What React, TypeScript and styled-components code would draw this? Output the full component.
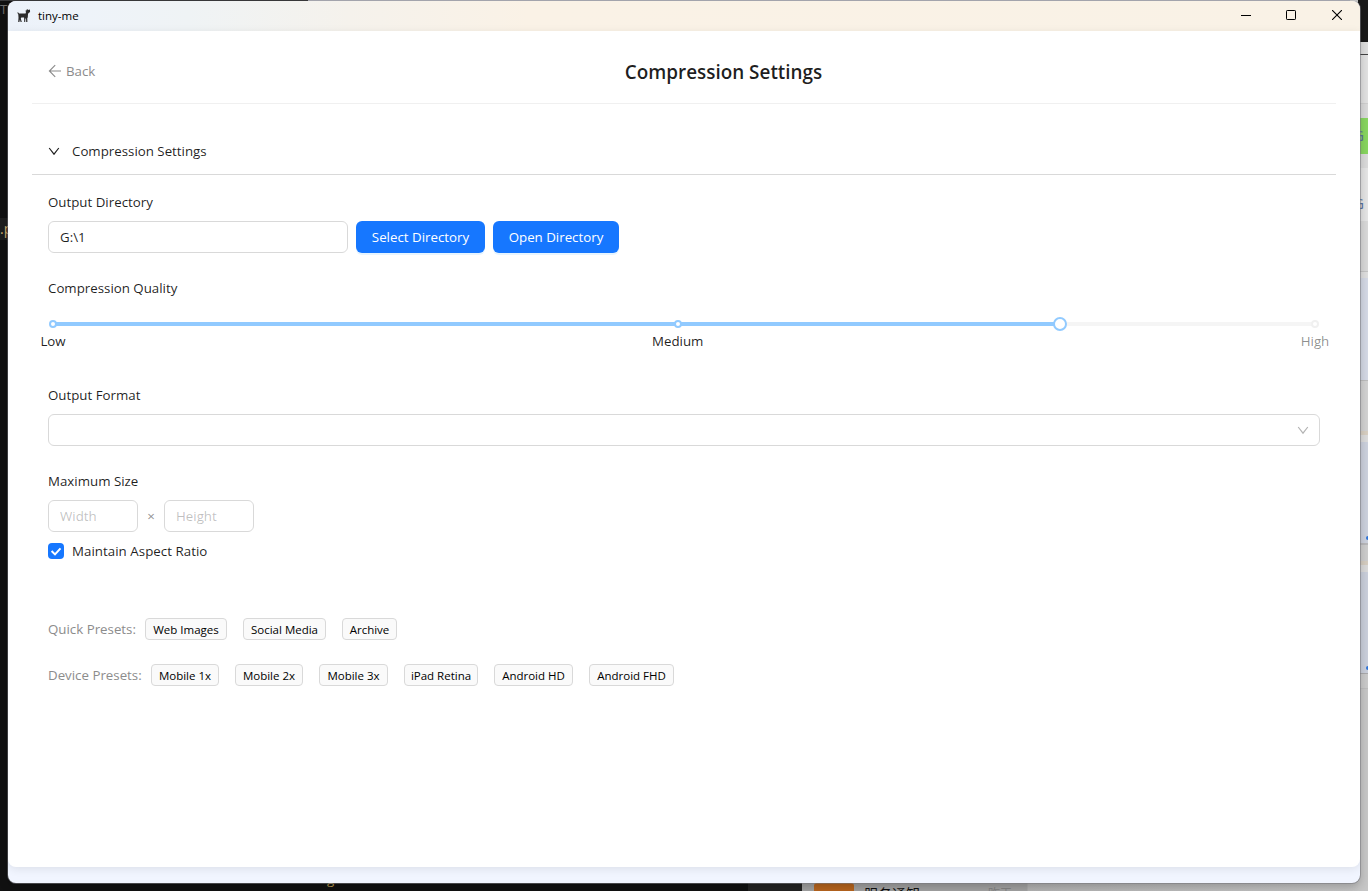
import React from "react";
import styled, { createGlobalStyle } from "styled-components";

const GlobalStyle = createGlobalStyle`
  * { box-sizing: border-box; }
  body {
    margin: 0;
    overflow: hidden;
    font-family: "Open Sans", "Noto Sans", sans-serif;
    font-size: 13.3px;
    line-height: 22px;
    color: rgba(0, 0, 0, 0.88);
  }
  button, input { font: inherit; color: inherit; letter-spacing: inherit; }
`;

const Desktop = styled.div`
  position: relative;
  width: 1368px;
  height: 891px;
  overflow: hidden;
  display: flex;
  background: #111;
`;

const EditorPane = styled.div`
  width: 802px;
  display: flex;
  flex-direction: column;
  justify-content: space-between;
  background:
    linear-gradient(90deg, #3a3a3c 0 308px, #a9abb3 308px) 0 0 / 100% 1px no-repeat,
    linear-gradient(90deg, #111 0 748px, #232323 748px);
`;

const EditorTop = styled.div`
  width: 308px;
  height: 270px;
  padding-top: 1px;
  color: #6d6d6d;
  font-size: 13px;
  line-height: 17px;
`;

const EditorFile = styled.div`
  width: 8px;
  height: 22px;
  margin-top: 200px;
  overflow: hidden;
  background: #1e1e1e;
  color: #d0b070;
  font-size: 14px;
  line-height: 22px;
`;

const EditorTail = styled.div`
  height: 12px;
  padding-left: 327px;
  overflow: hidden;
  color: #b79a52;
  line-height: 0;
`;

const ChatPane = styled.div`
  flex: 1;
  display: flex;
  justify-content: space-between;
  align-items: flex-end;
  background:
    linear-gradient(#a9abb3, #a9abb3) 0 0 / 548px 1px no-repeat,
    linear-gradient(90deg, #a3a3a3 0 225px, #b4b4b4 226px, #c6c6c6);
`;

const ChatRow = styled.div`
  display: flex;
  height: 8px;
  padding-left: 12px;
  overflow: hidden;
  font-family: "Noto Sans CJK SC", sans-serif;
  font-size: 14px;
  line-height: 20px;
  color: #111;
`;

const Avatar = styled.div`
  width: 40px;
  height: 40px;
  border-radius: 3px;
  margin-right: 10px;
  background: #b8651f;
`;

const ChatDate = styled.span`
  margin-left: 68px;
  font-size: 12px;
  color: #858585;
`;

const EdgeColumn = styled.div`
  width: 10px;
  height: 891px;
  display: flex;
  flex-direction: column;
`;

const EdgeBlock = styled.div<{ $h: number; $c: string; $shift: number }>`
  flex: none;
  height: ${(p) => p.$h}px;
  background: ${(p) => p.$c};
  display: flex;
  align-items: center;
  justify-content: flex-end;
  padding: ${(p) => p.$shift}px 4px 0 0;
  overflow: hidden;
  color: #5872a0;
  font-size: 14px;
`;

const EdgeDot = styled.span`
  width: 2px;
  height: 4px;
  margin: auto -4px 3px 0;
  border-radius: 2px 0 0 2px;
  background: #2f74d8;
`;

const Window = styled.main`
  position: absolute;
  left: 8px;
  top: 1px;
  width: 1352px;
  height: 882px;
  display: flex;
  flex-direction: column;
  overflow: hidden;
  border-radius: 8px;
  background: #f1f5ff;
  box-shadow: 0 1px 0 0 rgba(120, 120, 125, 0.55), 1px 0 0 0 rgba(120, 120, 125, 0.55),
    -1px 0 0 0 rgba(120, 120, 125, 0.45), 0 4px 10px rgba(0, 0, 0, 0.22);
`;

const TitleBar = styled.header`
  flex: none;
  height: 30px;
  display: flex;
  align-items: center;
  padding-left: 9px;
  font-size: 11.5px;
  color: #000;
  background: linear-gradient(90deg, #ecf2fa 0, #eef3f9 80px, #eff3f5 180px, #f5f2ec 340px, #faf2e6 520px, #f9f2e6 100%);
`;

const AppName = styled.span`
  flex: 1;
  margin-left: 6px;
`;

const WindowButton = styled.button`
  width: 46px;
  height: 30px;
  padding: 0 0 2px;
  border: 0;
  background: none;
  display: flex;
  align-items: center;
  justify-content: center;
`;

const Page = styled.section`
  flex: none;
  height: 836px;
  padding: 0 24px;
  background: #fff;
  border-radius: 0 0 8px 8px;
  box-shadow: 0 2px 10px rgba(0, 0, 0, 0.09);
`;

const PageHeader = styled.div`
  height: 73px;
  display: flex;
  align-items: center;
  padding: 9px 16px 0;
  border-bottom: 1px solid #f0f0f0;
`;

const BackButton = styled.button`
  width: 79px;
  padding: 0 0 2px;
  border: 0;
  background: none;
  display: flex;
  align-items: center;
  gap: 4px;
  color: #8c8c8c;
`;

const Title = styled.h1`
  flex: 1;
  margin: 0;
  text-align: center;
  font-size: 18.9px;
  font-weight: 600;
  line-height: 28px;
`;

const SectionHeader = styled.div`
  height: 71px;
  display: flex;
  align-items: center;
  gap: 12px;
  padding: 24px 16px 0;
  border-bottom: 1px solid #d9d9d9;
`;

const SectionBody = styled.div`
  padding: 16px;
`;

const Field = styled.div`
  margin-bottom: 24px;
`;

const Label = styled.div`
  height: 22px;
  margin-bottom: 8px;
`;

const ControlRow = styled.div`
  display: flex;
  align-items: center;
  gap: 8px;
`;

const TextInput = styled.input<{ $w: number }>`
  width: ${(p) => p.$w}px;
  height: 32px;
  padding: 4px 11px;
  border: 1px solid #d9d9d9;
  border-radius: 6px;
  background: #fff;
  outline: none;
  &::placeholder { color: rgba(0, 0, 0, 0.25); }
`;

const PrimaryButton = styled.button<{ $w: number }>`
  width: ${(p) => p.$w}px;
  height: 32px;
  padding: 0;
  border: 0;
  border-radius: 6px;
  background: #1677ff;
  color: #fff;
  white-space: nowrap;
  box-shadow: 0 2px 0 rgba(5, 145, 255, 0.1);
`;

const SliderField = styled.div`
  height: 107px;
`;

const Slider = styled.div`
  position: relative;
  height: 4px;
  margin: 23px 5px 0;
  border-radius: 2px;
  background: #f5f5f5;
`;

const SliderTrack = styled.div`
  width: 79.8%;
  height: 4px;
  border-radius: 2px;
  background: #91caff;
`;

const SliderDot = styled.span<{ $at: number; $on?: boolean }>`
  position: absolute;
  left: ${(p) => p.$at}%;
  top: -2px;
  width: 8px;
  height: 8px;
  margin-left: -4px;
  border: 2px solid ${(p) => (p.$on ? "#91caff" : "#f0f0f0")};
  border-radius: 50%;
  background: #fff;
`;

const SliderHandle = styled.span`
  position: absolute;
  left: 79.8%;
  top: -5px;
  width: 14px;
  height: 14px;
  margin-left: -7px;
  border: 2px solid #91caff;
  border-radius: 50%;
  background: #fff;
`;

const SliderMark = styled.span<{ $at: number; $on?: boolean }>`
  position: absolute;
  left: ${(p) => p.$at}%;
  top: 8px;
  transform: translateX(-50%);
  color: ${(p) => (p.$on ? "rgba(0,0,0,0.88)" : "rgba(0,0,0,0.45)")};
`;

const SelectBox = styled.div`
  height: 32px;
  display: flex;
  align-items: center;
  justify-content: flex-end;
  padding: 0 10px;
  border: 1px solid #d9d9d9;
  border-radius: 6px;
  color: rgba(0, 0, 0, 0.3);
`;

const Times = styled.span`
  width: 10px;
  text-align: center;
  color: #8c8c8c;
`;

const CheckRow = styled.label`
  display: flex;
  align-items: center;
  gap: 8px;
  margin-top: 8px;
  letter-spacing: 0.04px;
`;

const CheckBox = styled.span`
  width: 16px;
  height: 16px;
  border-radius: 4px;
  background: #1677ff;
  display: flex;
`;

const Presets = styled.div`
  display: flex;
  flex-direction: column;
  gap: 24px;
  padding-top: 32px;
`;

const PresetRow = styled.div`
  display: flex;
  gap: 16px;
  height: 22px;
`;

const PresetLabel = styled.span<{ $w: number }>`
  width: ${(p) => p.$w}px;
  margin-right: -16px;
  white-space: nowrap;
  color: #8c8c8c;
`;

const PresetTag = styled.button<{ $w: number }>`
  width: ${(p) => p.$w}px;
  height: 22px;
  padding: 1px 0 0;
  border: 1px solid #d9d9d9;
  border-radius: 4px;
  background: #fafafa;
  color: #000;
  font-size: 11.5px;
  line-height: 19px;
  white-space: nowrap;
`;

type Edge = { h: number; c: string; text?: string; shift?: number; dot?: boolean };

const edge: Edge[] = [
  { h: 42, c: "#191919" }, { h: 12, c: "#dedede" }, { h: 1, c: "#444" },
  { h: 48, c: "#e1e1e1" }, { h: 1, c: "#cfcfcf" }, { h: 14, c: "#dadada" },
  { h: 36, c: "#88d660", text: "G" }, { h: 14, c: "#dbdbdb" },
  { h: 53, c: "#e5e5e5", text: "G", shift: 18 },
  { h: 50, c: "#d9d9d9" }, { h: 1, c: "#c4c4c4" }, { h: 6, c: "#dfdfdf" },
  { h: 102, c: "#d4d9e5" }, { h: 1, c: "#bcbcbc" }, { h: 50, c: "#d2d2d2" },
  { h: 4, c: "#d8cfc2" }, { h: 7, c: "#dcdcdc" }, { h: 101, c: "#ccd1dd", dot: true },
  { h: 2, c: "#b8b8bb" }, { h: 16, c: "#cdcdcd" }, { h: 4, c: "#d5cdc1" },
  { h: 7, c: "#dadada" }, { h: 101, c: "#cacfdb", dot: true }, { h: 1, c: "#a9a9ac" },
  { h: 14, c: "#cacaca" }, { h: 1, c: "#bdbdbd" }, { h: 202, c: "#c6c6c6" },
];

const quick: [string, number][] = [["Web Images", 82], ["Social Media", 83], ["Archive", 55]];
const devices: [string, number][] = [
  ["Mobile 1x", 68], ["Mobile 2x", 68], ["Mobile 3x", 69],
  ["iPad Retina", 74], ["Android HD", 79], ["Android FHD", 85],
];

const DogIcon = () => (
  <svg width="15" height="16" viewBox="0 0 15 16" fill="#2b2b2b">
    <path d="M0.2 4.6 1.3 4.4 2 5.6 8.6 5.6 9 4 8.4 2.8 9.6 2.2 10 0.8 11 2 12.9 1.4 13.1 4 11.6 5 11 6 10.8 9.4 10.3 10 10.4 14H9.2L9 10.4H8.4L8.2 14H7.2L7.1 9.6 4.3 9.4 3.8 10.4 4.8 14H3.6L2.9 11.4 2.4 14H1.2L1.5 9.8 1.3 6.4Z" />
  </svg>
);

const ArrowLeft = () => (
  <svg width="14" height="14" fill="none" stroke="currentColor" strokeWidth="1.15">
    <path d="M7.2 1.2 1.4 7l5.8 5.8M1.4 7H13" />
  </svg>
);

const ChevronDown = () => (
  <svg width="12" height="12" fill="none" stroke="currentColor" strokeWidth="1.15">
    <path d="M1.2 3 6 9.2 10.8 3" />
  </svg>
);

export default function App() {
  return (
    <>
      <GlobalStyle />
      <Desktop>
        <EditorPane>
          <EditorTop>
            T
            <EditorFile>.p</EditorFile>
          </EditorTop>
          <EditorTail>g</EditorTail>
        </EditorPane>
        <ChatPane>
          <ChatRow>
            <Avatar />
            服务通知
            <ChatDate>昨天</ChatDate>
          </ChatRow>
          <EdgeColumn>
            {edge.map(({ h, c, text, shift = 0, dot }, i) => (
              <EdgeBlock key={i} $h={h} $c={c} $shift={shift}>
                {text}
                {dot && <EdgeDot />}
              </EdgeBlock>
            ))}
          </EdgeColumn>
        </ChatPane>

        <Window>
          <TitleBar>
            <DogIcon />
            <AppName>tiny-me</AppName>
            <WindowButton aria-label="Minimize">
              <svg width="12" height="10"><path d="M2 5.5h10" stroke="#000" /></svg>
            </WindowButton>
            <WindowButton aria-label="Maximize">
              <svg width="10" height="10"><rect x="0.5" y="0.5" width="9" height="9" rx="0.7" fill="none" stroke="#000" /></svg>
            </WindowButton>
            <WindowButton aria-label="Close">
              <svg width="10" height="10"><path d="M0 0l10 10M10 0l-10 10" stroke="#000" strokeWidth="1.1" /></svg>
            </WindowButton>
          </TitleBar>

          <Page>
            <PageHeader>
              <BackButton><ArrowLeft />Back</BackButton>
              <Title>Compression Settings</Title>
            </PageHeader>
            <SectionHeader>
              <ChevronDown />
              Compression Settings
            </SectionHeader>
            <SectionBody>
              <Field>
                <Label>Output Directory</Label>
                <ControlRow>
                  <TextInput $w={300} defaultValue={"G:\\1"} />
                  <PrimaryButton $w={129}>Select Directory</PrimaryButton>
                  <PrimaryButton $w={126}>Open Directory</PrimaryButton>
                </ControlRow>
              </Field>
              <SliderField>
                <Label>Compression Quality</Label>
                <Slider>
                  <SliderTrack />
                  <SliderDot $at={0} $on />
                  <SliderDot $at={49.5} $on />
                  <SliderDot $at={100} />
                  <SliderHandle />
                  <SliderMark $at={0} $on>Low</SliderMark>
                  <SliderMark $at={49.5} $on>Medium</SliderMark>
                  <SliderMark $at={100}>High</SliderMark>
                </Slider>
              </SliderField>
              <Field>
                <Label>Output Format</Label>
                <SelectBox><ChevronDown /></SelectBox>
              </Field>
              <Field>
                <Label>Maximum Size</Label>
                <ControlRow>
                  <TextInput $w={90} placeholder="Width" />
                  <Times>×</Times>
                  <TextInput $w={90} placeholder="Height" />
                </ControlRow>
                <CheckRow>
                  <CheckBox>
                    <svg width="16" height="16" fill="none" stroke="#fff" strokeWidth="2"><path d="M3.6 8 7 11.4 12.5 5.4" /></svg>
                  </CheckBox>
                  Maintain Aspect Ratio
                </CheckRow>
              </Field>
              <Presets>
                <PresetRow>
                  <PresetLabel $w={97}>Quick Presets:</PresetLabel>
                  {quick.map(([name, w]) => <PresetTag key={name} $w={w}>{name}</PresetTag>)}
                </PresetRow>
                <PresetRow>
                  <PresetLabel $w={103}>Device Presets:</PresetLabel>
                  {devices.map(([name, w]) => <PresetTag key={name} $w={w}>{name}</PresetTag>)}
                </PresetRow>
              </Presets>
            </SectionBody>
          </Page>
        </Window>
      </Desktop>
    </>
  );
}
